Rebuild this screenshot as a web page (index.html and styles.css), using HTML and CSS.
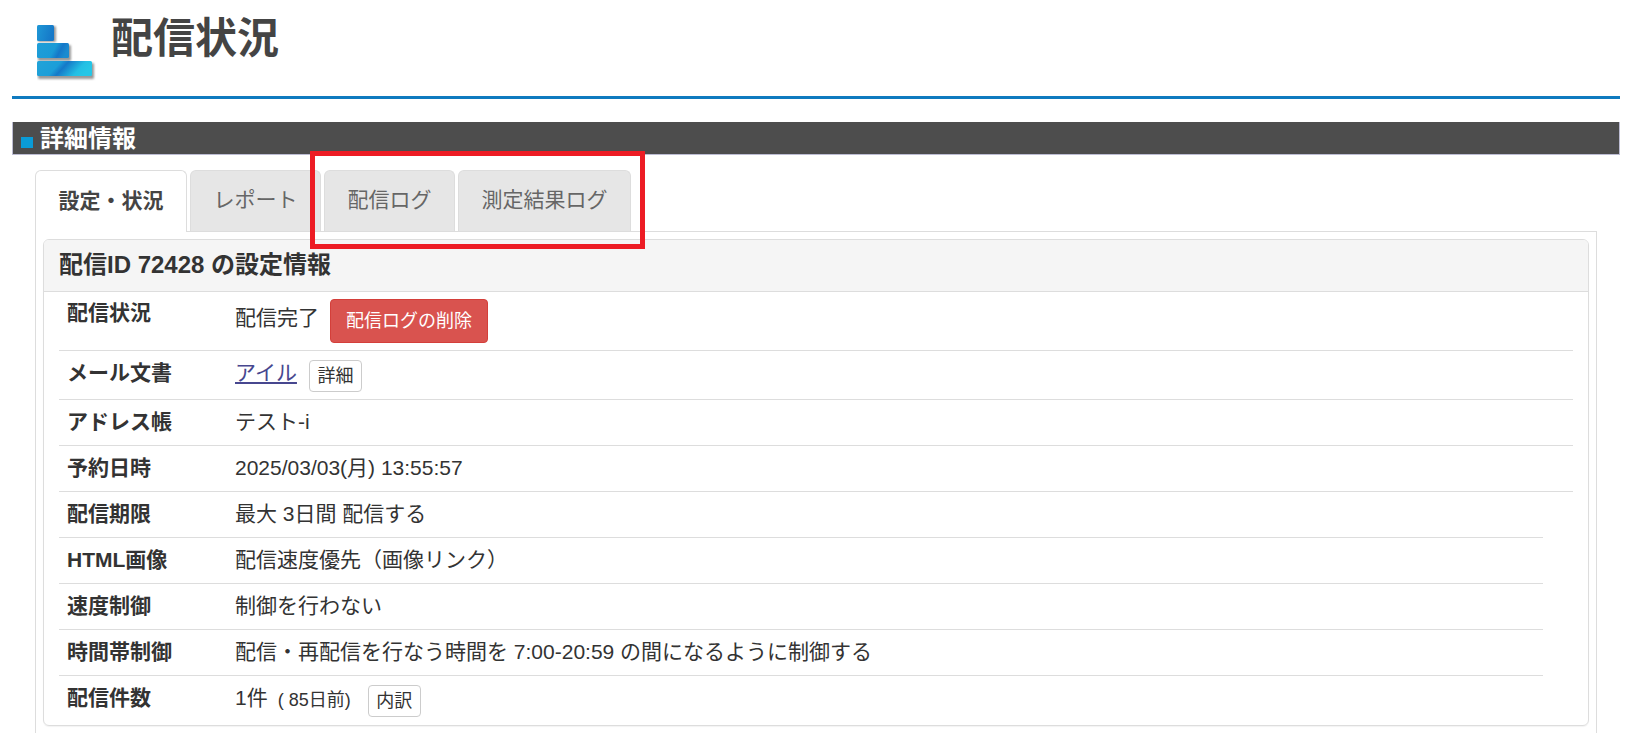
FILE: index.html
```html
<!DOCTYPE html>
<html lang="ja">
<head>
<meta charset="utf-8">
<title>配信状況</title>
<link rel="stylesheet" href="styles.css">
</head>
<body>
<div class="page">
  <header class="page-head">
    <svg class="logo" width="60" height="58" viewBox="0 0 60 58" aria-hidden="true">
      <defs>
        <linearGradient id="bar" x1="0" y1="0" x2="1" y2="0.25">
          <stop offset="0" stop-color="#22a3d8"/>
          <stop offset="0.42" stop-color="#1c9ed8"/>
          <stop offset="0.55" stop-color="#1579c8"/>
          <stop offset="0.85" stop-color="#23bfe4"/>
          <stop offset="1" stop-color="#25c6e6"/>
        </linearGradient>
        <linearGradient id="bar2" x1="0" y1="0" x2="1" y2="0.25">
          <stop offset="0" stop-color="#1f9ed8"/>
          <stop offset="0.6" stop-color="#1a9ad6"/>
          <stop offset="0.8" stop-color="#1577c8"/>
          <stop offset="1" stop-color="#1a8bd0"/>
        </linearGradient>
        <linearGradient id="bar3" x1="0" y1="0" x2="1" y2="0.25">
          <stop offset="0" stop-color="#1f98d6"/>
          <stop offset="1" stop-color="#1578c8"/>
        </linearGradient>
        <filter id="soft" x="-20%" y="-20%" width="140%" height="140%">
          <feGaussianBlur stdDeviation="1"/>
        </filter>
      </defs>
      <g fill="#999" filter="url(#soft)">
        <rect x="1" y="1" width="18" height="16" rx="1.5"/>
        <rect x="1" y="20" width="33" height="16" rx="1.5"/>
        <rect x="1" y="38" width="56" height="16" rx="1.5"/>
      </g>
      <rect x="0" y="0" width="17" height="16" rx="1.5" fill="url(#bar3)"/>
      <rect x="0" y="18" width="32" height="15" rx="1.5" fill="url(#bar2)"/>
      <rect x="0" y="36" width="55" height="15" rx="1.5" fill="url(#bar)"/>
    </svg>
    <h1 class="page-title">配信状況</h1>
  </header>

  <h2 class="section-bar"><span class="section-mark"></span><span class="section-text">詳細情報</span></h2>

  <div class="tabs-area">
    <nav class="tabs">
      <a class="tab tab-active">設定・状況</a>
      <a class="tab tab-report">レポート</a>
      <a class="tab tab-log">配信ログ</a>
      <a class="tab tab-result">測定結果ログ</a>
    </nav>
    <div class="annotation"></div>

    <div class="tab-body">
      <section class="panel">
        <h3 class="panel-head">配信ID 72428 の設定情報</h3>
        <div class="rows">
          <div class="row row-first">
            <div class="label">配信状況</div>
            <div class="value value-status">配信完了<button class="btn btn-danger">配信ログの削除</button></div>
          </div>
          <div class="row row-doc">
            <div class="label">メール文書</div>
            <div class="value"><a class="link">アイル</a><button class="btn btn-plain">詳細</button></div>
          </div>
          <div class="row">
            <div class="label">アドレス帳</div>
            <div class="value">テスト-i</div>
          </div>
          <div class="row">
            <div class="label">予約日時</div>
            <div class="value">2025/03/03(月) 13:55:57</div>
          </div>
          <div class="row row-narrow">
            <div class="label">配信期限</div>
            <div class="value">最大 3日間 配信する</div>
          </div>
          <div class="row row-narrow">
            <div class="label">HTML画像</div>
            <div class="value">配信速度優先（画像リンク）</div>
          </div>
          <div class="row row-narrow">
            <div class="label">速度制御</div>
            <div class="value">制御を行わない</div>
          </div>
          <div class="row row-narrow">
            <div class="label">時間帯制御</div>
            <div class="value">配信・再配信を行なう時間を 7:00-20:59 の間になるように制御する</div>
          </div>
          <div class="row row-count">
            <div class="label">配信件数</div>
            <div class="value">1件<small class="note">( 85日前)</small><button class="btn btn-plain btn-count">内訳</button></div>
          </div>
        </div>
      </section>
    </div>
  </div>
</div>
</body>
</html>
```
FILE: styles.css
```css
* {
  box-sizing: border-box;
}

html,
body {
  margin: 0;
  height: 733px;
  overflow: hidden;
  background: #fff;
}

body {
  font-family: "Liberation Sans", "Noto Sans CJK JP", sans-serif;
  font-size: 21px;
  color: #333;
}

.page {
  padding: 0 6px 0 12px;
}

.page-head {
  display: flex;
  align-items: flex-start;
  height: 99px;
  border-bottom: 3px solid #0f7abf;
  padding: 25px 0 0 25px;
}

.logo {
  flex: none;
  margin-right: 14px;
}

.page-title {
  margin: -14px 0 0;
  font-size: 42px;
  line-height: 56px;
  font-weight: 700;
  color: #444;
}

.section-bar {
  display: flex;
  align-items: flex-start;
  height: 33px;
  margin: 23px 0 0;
  padding-left: 8px;
  background: #4d4d4d;
  border: solid #bcbcd2;
  border-width: 0 1px 1px;
  font-size: 24px;
  line-height: 30px;
  font-weight: 700;
  color: #fff;
}

.section-mark {
  width: 12px;
  height: 11px;
  margin: 15px 7px 0 0;
  background: #0a9bd6;
}

.section-text {
  margin-top: 2px;
}

.tabs-area {
  position: relative;
  padding: 15px 23px 0;
}

.tabs {
  position: relative;
  z-index: 1;
  display: flex;
  gap: 3px;
  height: 62px;
  margin-bottom: -1px;
}

.tab {
  display: flex;
  align-items: center;
  justify-content: center;
  height: 61px;
  padding-bottom: 6px;
  border: 1px solid #ddd;
  border-bottom: 0;
  border-radius: 6px 6px 0 0;
  background: #e6e6e6;
  color: #666;
  font-size: 21px;
}

.tab-active {
  width: 152px;
  height: 62px;
  background: #fff;
  color: #444;
  font-weight: 700;
}

.tab-report {
  width: 131px;
}

.tab-log {
  width: 131px;
}

.tab-result {
  width: 173px;
}

.annotation {
  position: absolute;
  z-index: 2;
  left: 298px;
  top: -4px;
  width: 335px;
  height: 98px;
  border: 5px solid #ed1c24;
  pointer-events: none;
}

.tab-body {
  height: 503px;
  padding: 7px 7px 0;
  border: 1px solid #ddd;
  border-bottom: 0;
}

.panel {
  height: 487px;
  border: 1px solid #ddd;
  border-radius: 6px;
  box-shadow: 0 1px 1px rgba(0, 0, 0, 0.05);
}

.panel-head {
  height: 52px;
  margin: 0;
  padding: 0 15px;
  background: #f5f5f5;
  border-bottom: 1px solid #ddd;
  border-radius: 5px 5px 0 0;
  font-size: 24px;
  line-height: 50px;
  font-weight: 700;
  color: #333;
}

.rows {
  padding: 0 15px;
}

.row {
  display: flex;
  height: 46px;
  padding: 7px 0 0 8px;
  border-bottom: 1px solid #ddd;
  line-height: 30px;
}

.row-first {
  height: 59px;
  padding-top: 6px;
}

.row-doc {
  height: 49px;
}

.row-narrow {
  margin-right: 30px;
}

.row-count {
  border-bottom: 0;
}

.label {
  flex: none;
  width: 168px;
  font-weight: 700;
  color: #333;
}

.value {
  display: flex;
  align-items: flex-start;
}

.value-status {
  padding-top: 5px;
}

.link {
  color: #47478f;
  text-decoration: underline;
}

.btn {
  font: inherit;
  cursor: pointer;
  border-radius: 4px;
}

.btn-danger {
  width: 158px;
  height: 44px;
  margin: -4px 0 0 11px;
  border: 1px solid #d43f3a;
  background: #d9534f;
  color: #fff;
  font-size: 18px;
  padding: 0;
}

.btn-plain {
  width: 53px;
  height: 32px;
  margin: 2px 0 0 12px;
  padding: 0;
  border: 1px solid #ccc;
  background: #fff;
  color: #333;
  font-size: 18px;
  line-height: 28px;
}

.note {
  margin-left: 10px;
  font-size: 18px;
  line-height: 34px;
}

.btn-count {
  margin-left: 17px;
}
```
